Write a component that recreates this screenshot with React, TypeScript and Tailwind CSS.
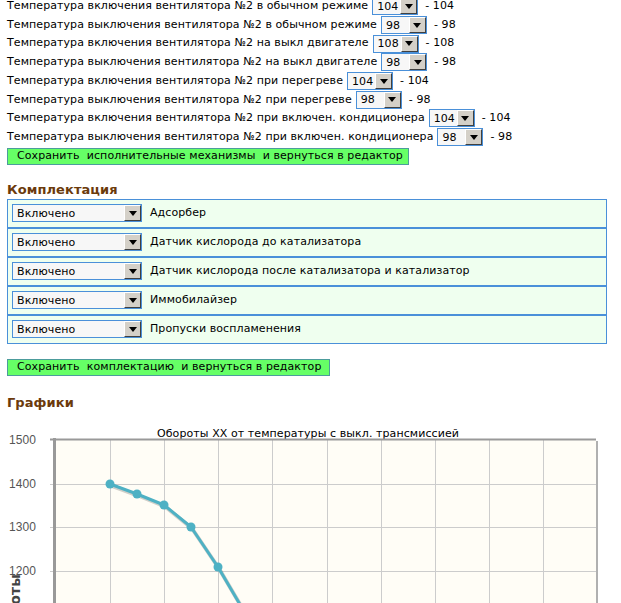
import React from 'react';

const fanRows = [
  { label: 'Температура включения вентилятора №2 в обычном режиме', value: '104' },
  { label: 'Температура выключения вентилятора №2 в обычном режиме', value: '98' },
  { label: 'Температура включения вентилятора №2 на выкл двигателе', value: '108' },
  { label: 'Температура выключения вентилятора №2 на выкл двигателе', value: '98' },
  { label: 'Температура включения вентилятора №2 при перегреве', value: '104' },
  { label: 'Температура выключения вентилятора №2 при перегреве', value: '98' },
  { label: 'Температура включения вентилятора №2 при включен. кондиционера', value: '104' },
  { label: 'Температура выключения вентилятора №2 при включен. кондиционера', value: '98' },
];

const equipment = [
  'Адсорбер',
  'Датчик кислорода до катализатора',
  'Датчик кислорода после катализатора и катализатор',
  'Иммобилайзер',
  'Пропуски воспламенения',
];

function Arrow() {
  return (
    <div className="w-[17px] h-[16px] bg-[#d4d0c8] border border-t-white border-l-white border-r-[#404040] border-b-[#404040] flex items-center justify-center shrink-0">
      <svg width="8" height="5" viewBox="0 0 8 5">
        <polygon points="0,0 8,0 4,5" fill="#000" />
      </svg>
    </div>
  );
}

function FakeSelect({ value, wide }: { value: string; wide?: boolean }) {
  return (
    <div
      className={
        'h-[18px] border border-[#4a90d9] bg-[#f7f7f7] flex items-center justify-between shrink-0 ' +
        (wide ? 'w-[130px]' : 'w-[46px]')
      }
    >
      <span className="pl-[4px] leading-none">{value}</span>
      <Arrow />
    </div>
  );
}

function SaveButton({ text, width }: { text: string; width: string }) {
  return (
    <div
      className={
        'h-[17px] bg-[#66ff66] border border-[#4c9c9c] flex items-center pl-[9px] whitespace-pre text-black ' + width
      }
    >
      {text}
    </div>
  );
}

function Chart() {
  const pts: [number, number][] = [
    [110, 484],
    [137, 494],
    [164, 505],
    [191, 527],
    [218, 567],
    [245, 613],
  ];
  const vlines = [110, 164, 218, 272, 327, 381, 435, 489, 543];
  const hlines = [484, 527, 571];
  const d = pts.map((p, i) => (i === 0 ? 'M' : 'L') + p[0] + ' ' + p[1]).join(' ');
  return (
    <svg width="621" height="192" viewBox="0 411 621 192" className="block">
      <text x="308" y="437" textAnchor="middle" fontFamily="DejaVu Sans, sans-serif" fontSize="11" fill="#000">
        Обороты XX от температуры с выкл. трансмиссией
      </text>
      <rect x="57" y="441" width="541" height="170" fill="#b0b0b0" />
      <rect x="55" y="439" width="541" height="170" fill="#fffdf6" />
      {vlines.map((x) => (
        <line key={x} x1={x + 0.5} y1="439" x2={x + 0.5} y2="603" stroke="#cccccc" />
      ))}
      {hlines.map((y) => (
        <line key={y} x1="50" y1={y + 0.5} x2="596" y2={y + 0.5} stroke="#cccccc" />
      ))}
      <line x1="50" y1="439.5" x2="596" y2="439.5" stroke="#999999" strokeWidth="2" />
      <line x1="54.5" y1="438" x2="54.5" y2="603" stroke="#999999" strokeWidth="3" />
      {[
        ['1500', 444],
        ['1400', 488],
        ['1300', 531],
        ['1200', 575],
      ].map(([t, y]) => (
        <text key={t} x="36" y={y} textAnchor="end" fontFamily="Liberation Sans, sans-serif" fontSize="12" fill="#555">
          {t}
        </text>
      ))}
      <text
        x="20"
        y="574"
        transform="rotate(-90 20 574)"
        textAnchor="end"
        fontFamily="DejaVu Sans, sans-serif"
        fontWeight="bold"
        fontSize="14"
        fill="#444"
      >
        Обороты
      </text>
      <path d={d} fill="none" stroke="rgba(0,0,0,0.18)" strokeWidth="4" transform="translate(1 1.5)" />
      <path d={d} fill="none" stroke="#4eb1c4" strokeWidth="3" strokeLinejoin="round" />
      {pts.map(([x, y]) => (
        <circle key={x} cx={x} cy={y} r="4.5" fill="#4eb1c4" />
      ))}
    </svg>
  );
}

export default function App() {
  return (
    <div
      className="w-[621px] h-[603px] overflow-hidden bg-white text-black text-[11px] tracking-[0.08px]"
      style={{ fontFamily: '"DejaVu Sans", Verdana, sans-serif' }}
    >
      <div className="pl-[7px] -mt-[3px]">
        {fanRows.map((r, i) => (
          <div key={i} className="h-[18.7px] flex items-center">
            <span>{r.label}</span>
            <div className="ml-[4px]">
              <FakeSelect value={r.value} />
            </div>
            <span className="ml-[7px]">- {r.value}</span>
          </div>
        ))}
        <div className="mt-[1px]">
          <SaveButton text="Сохранить  исполнительные механизмы  и вернуться в редактор" width="w-[402px]" />
        </div>

        <h2 className="mt-[17px] h-[16px] leading-[16px] text-[13px] font-bold text-[#6b3a0c]">Комплектация</h2>
        <div className="mt-[1px] w-[600px]">
          {equipment.map((e) => (
            <div key={e} className="h-[29px] border border-[#4a90d9] bg-[#efffef] flex items-center pl-[4px]">
              <FakeSelect value="Включено" wide />
              <span className="ml-[8px]">{e}</span>
            </div>
          ))}
        </div>

        <div className="mt-[15px]">
          <SaveButton text="Сохранить  комплектацию  и вернуться в редактор" width="w-[323px]" />
        </div>

        <h2 className="mt-[19px] h-[16px] leading-[16px] text-[13px] font-bold text-[#6b3a0c]">Графики</h2>
      </div>
      <Chart />
    </div>
  );
}
